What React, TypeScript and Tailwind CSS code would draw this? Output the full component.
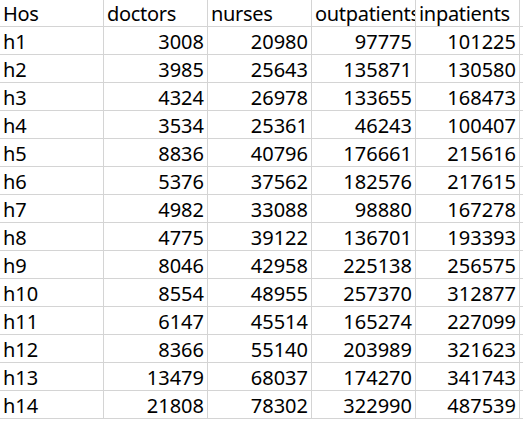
import React from "react";

const rows: [string, number, number, number, number][] = [
  ["h1", 3008, 20980, 97775, 101225],
  ["h2", 3985, 25643, 135871, 130580],
  ["h3", 4324, 26978, 133655, 168473],
  ["h4", 3534, 25361, 46243, 100407],
  ["h5", 8836, 40796, 176661, 215616],
  ["h6", 5376, 37562, 182576, 217615],
  ["h7", 4982, 33088, 98880, 167278],
  ["h8", 4775, 39122, 136701, 193393],
  ["h9", 8046, 42958, 225138, 256575],
  ["h10", 8554, 48955, 257370, 312877],
  ["h11", 6147, 45514, 165274, 227099],
  ["h12", 8366, 55140, 203989, 321623],
  ["h13", 13479, 68037, 174270, 341743],
  ["h14", 21808, 78302, 322990, 487539],
];

const headers = ["Hos", "doctors", "nurses", "outpatients", "inpatients"];

export default function App() {
  return (
    <div
      className="w-[523px] h-[422px] overflow-hidden bg-white text-black text-[20px]"
      style={{ fontFamily: '"Noto Sans", "Open Sans", sans-serif' }}
    >
      <div className="-mt-px">
        <div className="flex h-[28px] border-b border-[#d4d4d4] tracking-[-0.3px]">
          {headers.map((h) => (
            <div
              key={h}
              className="w-[104px] shrink-0 border-r border-[#d4d4d4] flex items-center pl-[3px] overflow-hidden whitespace-nowrap leading-none pt-[2px]"
            >
              {h}
            </div>
          ))}
        </div>
        {rows.map((r) => (
          <div key={r[0]} className="flex h-[28px] border-b border-[#d4d4d4]">
            <div className="w-[104px] shrink-0 border-r border-[#d4d4d4] flex items-center pl-[3px] overflow-hidden whitespace-nowrap leading-none pt-[2px]">
              {r[0]}
            </div>
            {r.slice(1).map((v, i) => (
              <div
                key={i}
                className="w-[104px] shrink-0 border-r border-[#d4d4d4] flex items-center justify-end pr-[3px] overflow-hidden whitespace-nowrap leading-none pt-[2px]"
              >
                {v}
              </div>
            ))}
          </div>
        ))}
      </div>
    </div>
  );
}
